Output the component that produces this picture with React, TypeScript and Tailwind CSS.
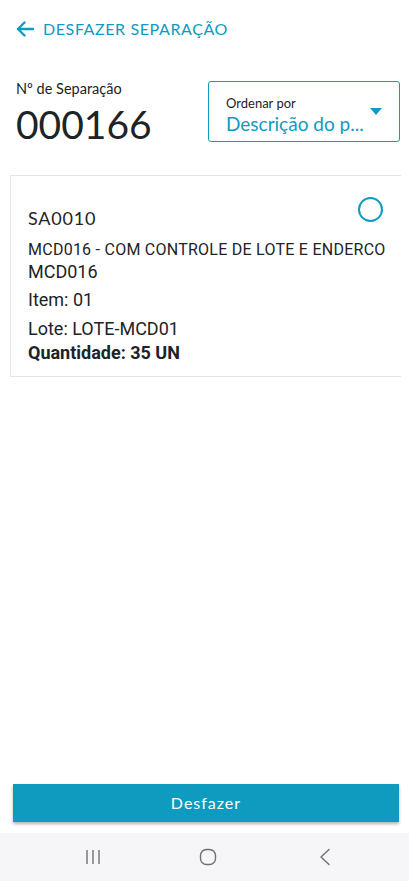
import React from 'react';

const teal = '#0f9ac0';

const App: React.FC = () => {
  return (
    <div className="flex h-[881px] w-[409px] flex-col bg-white" style={{ fontFamily: 'Lato, "Noto Sans", sans-serif' }}>
      <header className="flex h-[24px] items-center mt-[17px] pl-[16px] gap-[9px]">
        <svg width="18" height="16" viewBox="0 0 18 16" fill="none" stroke={teal} strokeWidth="2.4" strokeLinecap="round" strokeLinejoin="round">
          <path d="M17 8H2M8.5 1.5L2 8l6.5 6.5" />
        </svg>
        <span className="text-[16px] tracking-[0.6px] text-[#0f9ac0]">DESFAZER SEPARAÇÃO</span>
      </header>

      <section className="mt-[40px] flex justify-between pl-[16px] pr-[9px]">
        <div>
          <p className="text-[14.5px] leading-[16px] text-[#1d2327]">Nº de Separação</p>
          <p className="text-[39px] leading-[40px] mt-[7px] text-[#1d2327]">000166</p>
        </div>
        <div className="relative h-[61px] w-[192px] rounded-[3px] border border-[#0f9ac0] pl-[17px] pt-[13px]">
          <p className="text-[13px] leading-[16px] text-[#1d2327]">Ordenar por</p>
          <p className="text-[19px] leading-[22px] mt-[2px] text-[#0f9ac0]">Descrição do p...</p>
          <svg className="absolute right-[17px] top-[26px]" width="12" height="7" viewBox="0 0 12 7">
            <path d="M0 0h12L6 7z" fill={teal} />
          </svg>
        </div>
      </section>

      <div className="ml-[10px] mt-[31px] w-[391px] h-[202px] border-l border-t border-b border-[#e4e4e4] relative pl-[17px]" style={{ fontFamily: 'Roboto, "Noto Sans", sans-serif' }}>
        <div className="absolute right-[18px] top-[21px] h-[25px] w-[25px] rounded-full border-2 border-[#0f9ac0]" />
        <p className="mt-[30px] text-[18px] leading-[24px] tracking-[0.8px] text-[#1d2327]" style={{ fontFamily: 'Lato, "Noto Sans", sans-serif' }}>SA0010</p>
        <p className="mt-[10px] text-[16px] leading-[20px] tracking-[0.25px] text-[#1d2327]">MCD016 - COM CONTROLE DE LOTE E ENDERCO</p>
        <p className="mt-[0px] text-[18px] leading-[24px] text-[#1d2327]">MCD016</p>
        <p className="mt-[4px] text-[18px] leading-[24px] text-[#1d2327]">Item: 01</p>
        <p className="mt-[5px] text-[18px] leading-[24px] text-[#1d2327]">Lote: LOTE-MCD01</p>
        <p className="text-[18px] leading-[24px] font-bold text-[#1d2327]">Quantidade: 35 UN</p>
      </div>

      <div className="flex-1" />

      <button className="ml-[13px] mr-[10px] h-[38px] bg-[#0f9ac0] text-white text-[16px] tracking-[1px] shadow-[0_2px_3px_rgba(0,0,0,0.3)]">
        Desfazer
      </button>

      <nav className="mt-[11px] flex h-[48px] items-center bg-[#f6f6f8] pl-[85px]">
        <svg width="16" height="16" viewBox="0 0 16 16" stroke="#707070" strokeWidth="1.4" fill="none">
          <path d="M2 1v14M8 1v14M14 1v14" />
        </svg>
        <svg className="ml-[98px]" width="18" height="18" viewBox="0 0 18 18" stroke="#707070" strokeWidth="1.4" fill="none">
          <rect x="1.5" y="1.5" width="15" height="15" rx="6" />
        </svg>
        <svg className="ml-[102px]" width="12" height="18" viewBox="0 0 12 18" stroke="#707070" strokeWidth="1.4" fill="none" strokeLinecap="round" strokeLinejoin="round">
          <path d="M10 1.5L2 9l8 7.5" />
        </svg>
      </nav>
    </div>
  );
};

export default App;
